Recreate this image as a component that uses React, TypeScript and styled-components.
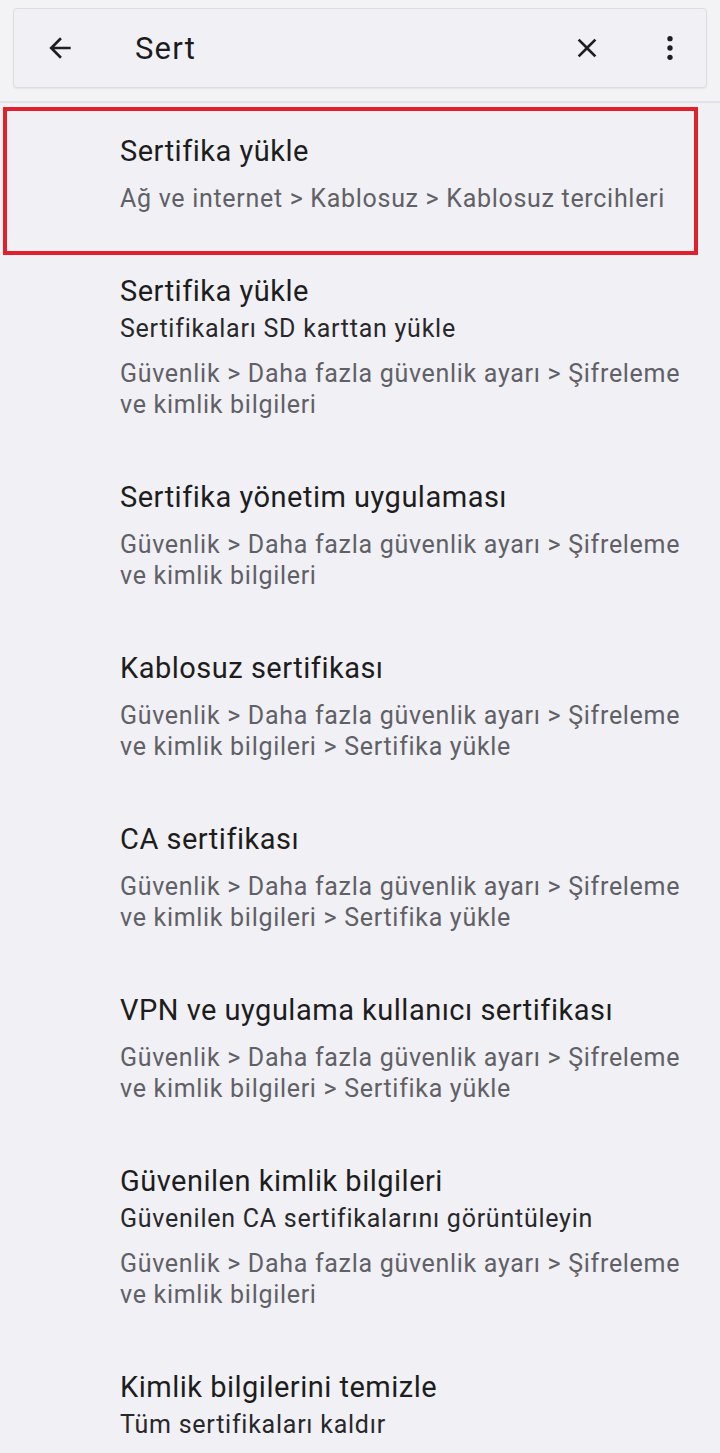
import * as React from 'react'
import styled, { createGlobalStyle } from 'styled-components'

interface IResult {
  title: string,
  summary?: string,
  path: string,
  highlighted?: boolean,
}

const results: IResult[] = [
  { title: 'Sertifika yükle', path: 'Ağ ve internet > Kablosuz > Kablosuz tercihleri', highlighted: true },
  { title: 'Sertifika yükle', summary: 'Sertifikaları SD karttan yükle', path: 'Güvenlik > Daha fazla güvenlik ayarı > Şifreleme ve kimlik bilgileri' },
  { title: 'Sertifika yönetim uygulaması', path: 'Güvenlik > Daha fazla güvenlik ayarı > Şifreleme ve kimlik bilgileri' },
  { title: 'Kablosuz sertifikası', path: 'Güvenlik > Daha fazla güvenlik ayarı > Şifreleme ve kimlik bilgileri > Sertifika yükle' },
  { title: 'CA sertifikası', path: 'Güvenlik > Daha fazla güvenlik ayarı > Şifreleme ve kimlik bilgileri > Sertifika yükle' },
  { title: 'VPN ve uygulama kullanıcı sertifikası', path: 'Güvenlik > Daha fazla güvenlik ayarı > Şifreleme ve kimlik bilgileri > Sertifika yükle' },
  { title: 'Güvenilen kimlik bilgileri', summary: 'Güvenilen CA sertifikalarını görüntüleyin', path: 'Güvenlik > Daha fazla güvenlik ayarı > Şifreleme ve kimlik bilgileri' },
  { title: 'Kimlik bilgilerini temizle', summary: 'Tüm sertifikaları kaldır', path: '' },
]

const GlobalStyle = createGlobalStyle`
  html, body {
    margin: 0;
    padding: 0;
    background: #f0f0f5;
    font-family: Roboto, "Noto Sans", sans-serif;
  }
`

const Page = styled.div`
  width: 720px;
  min-height: 1453px;
  overflow: hidden;
  background: #f0f0f5;
`
const TopArea = styled.div`
  background: #f3f3f6;
  padding: 8px 13px 13px 13px;
  border-bottom: 2px solid #e2e2e6;
`
const SearchBar = styled.div`
  height: 80px;
  box-sizing: border-box;
  display: flex;
  align-items: center;
  background: #f1f1f5;
  border: 1px solid #dedee2;
  border-radius: 4px;
  box-shadow: 0 1px 2px rgba(0, 0, 0, 0.06);
  padding: 0 18px 0 28px;
`
const IconButton = styled.div`
  width: 36px;
  height: 36px;
  display: flex;
  align-items: center;
  justify-content: center;
  color: #1f1f22;
`
const Query = styled.div`
  flex: 1;
  margin-left: 57px;
  font-size: 31px;
  letter-spacing: 1.2px;
  color: #1c1c1f;
`
const Actions = styled.div`
  display: flex;
  align-items: center;
  gap: 47px;
`
const List = styled.div`
  display: flex;
  flex-direction: column;
`
const Item = styled.div`
  position: relative;
  padding: 29px 24px 29px 120px;
`
const Highlight = styled.div`
  position: absolute;
  left: 3px;
  right: 22px;
  top: 4px;
  bottom: -12px;
  border: 4px solid #e0212b;
  pointer-events: none;
`
const Title = styled.div`
  font-size: 29px;
  letter-spacing: 0.5px;
  line-height: 38px;
  color: #1d1d20;
`
const Summary = styled.div`
  font-size: 25px;
  letter-spacing: 0.75px;
  line-height: 38px;
  color: #28282b;
`
const Path = styled.div<{ $afterSummary: boolean }>`
  margin-top: ${p => (p.$afterSummary ? '10px' : '13px')};
  font-size: 25px;
  letter-spacing: 0.7px;
  line-height: 31px;
  color: #606066;
`

const BackIcon = () => (
  <svg width="32" height="32" viewBox="0 0 24 24">
    <path d="M20 11H7.83l5.59-5.59L12 4l-8 8 8 8 1.41-1.41L7.83 13H20v-2z" fill="currentColor" />
  </svg>
)
const CloseIcon = () => (
  <svg width="32" height="32" viewBox="0 0 24 24">
    <path d="M19 6.41L17.59 5 12 10.59 6.41 5 5 6.41 10.59 12 5 17.59 6.41 19 12 13.41 17.59 19 19 17.59 13.41 12z" fill="currentColor" />
  </svg>
)
const MoreIcon = () => (
  <svg width="32" height="32" viewBox="0 0 24 24">
    <circle cx="12" cy="5" r="2" fill="currentColor" />
    <circle cx="12" cy="12" r="2" fill="currentColor" />
    <circle cx="12" cy="19" r="2" fill="currentColor" />
  </svg>
)

export default function App() {
  return (
    <Page>
      <GlobalStyle />
      <TopArea>
        <SearchBar>
          <IconButton><BackIcon /></IconButton>
          <Query>Sert</Query>
          <Actions>
            <IconButton><CloseIcon /></IconButton>
            <IconButton><MoreIcon /></IconButton>
          </Actions>
        </SearchBar>
      </TopArea>
      <List>
        {results.map((r, i) => (
          <Item key={i}>
            {r.highlighted && <Highlight />}
            <Title>{r.title}</Title>
            {r.summary && <Summary>{r.summary}</Summary>}
            {r.path && <Path $afterSummary={!!r.summary}>{r.path}</Path>}
          </Item>
        ))}
      </List>
    </Page>
  )
}
